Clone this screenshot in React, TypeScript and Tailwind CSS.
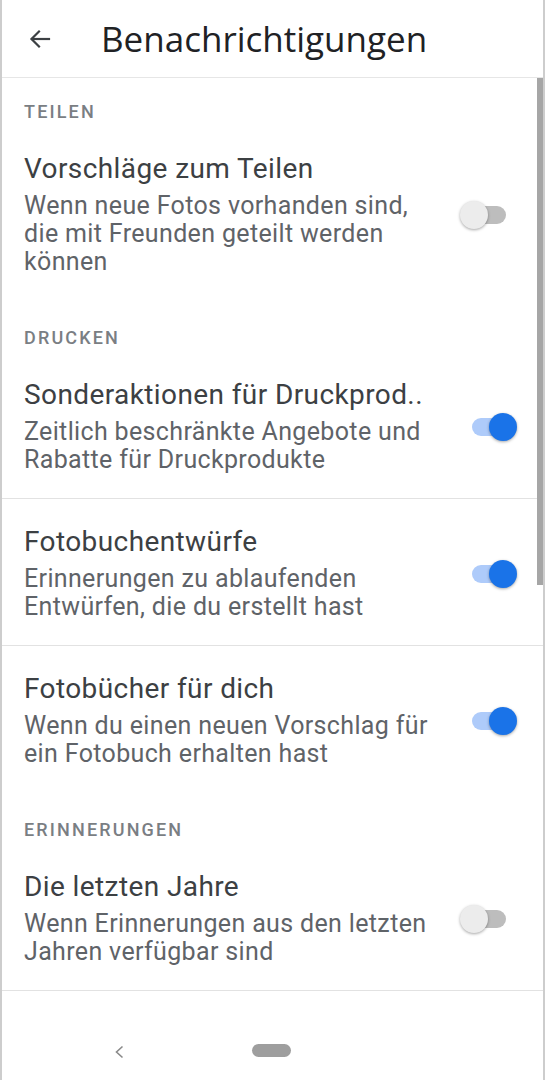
import React from "react";

function Toggle({ on }: { on: boolean }) {
  return (
    <div className="relative w-[57px] h-[28px] shrink-0">
      <div
        className={
          "absolute left-[12px] right-[11px] top-[5px] h-[18px] rounded-full " +
          (on ? "bg-[#aecbfa]" : "bg-[#bdbdbd]")
        }
      />
      <div
        className={
          "absolute top-0 w-[28px] h-[28px] rounded-full shadow-[0_1px_3px_rgba(0,0,0,0.35)] " +
          (on ? "right-0 bg-[#1a73e8]" : "left-0 bg-[#ececec]")
        }
      />
    </div>
  );
}

function SectionHeader({ children, first }: { children: React.ReactNode; first?: boolean }) {
  return (
    <div
      className={
        "pl-[22px] pb-[4px] text-[18px] leading-[20px] font-medium tracking-[0.12em] text-[#7a7e83] " +
        (first ? "pt-[24px]" : "pt-[28px]")
      }
    >
      {children}
    </div>
  );
}

function Item({
  title,
  lines,
  on,
  divider,
}: {
  title: string;
  lines: string[];
  on: boolean;
  divider?: boolean;
}) {
  return (
    <div
      className={
        "flex items-center pl-[22px] pr-[26px] pt-[27px] pb-[24px] " +
        (divider ? "border-b border-[#e2e2e2]" : "")
      }
    >
      <div className="flex-1 min-w-0">
        <div className="text-[28px] leading-[32px] tracking-[0.4px] text-[#3c4043] whitespace-nowrap">
          {title}
        </div>
        <div className="mt-[7px] text-[25px] leading-[28px] tracking-[0.35px] text-[#5f6368]">
          {lines.map((l, i) => (
            <div key={i} className="whitespace-nowrap">
              {l}
            </div>
          ))}
        </div>
      </div>
      <Toggle on={on} />
    </div>
  );
}

export default function App() {
  return (
    <div
      className="w-[545px] h-[1080px] bg-white flex flex-col overflow-hidden border-l-2 border-r-2 border-[#cdcdcd]"
      style={{ fontFamily: "Roboto, 'Noto Sans', sans-serif" }}
    >
      <header className="h-[78px] shrink-0 flex items-center border-b border-[#e6e6e6]">
        <svg
          className="ml-[26px]"
          width="24"
          height="24"
          viewBox="0 0 24 24"
          fill="none"
          stroke="#3c4043"
          strokeWidth="2.2"
          strokeLinecap="square"
        >
          <path d="M21 12H4" />
          <path d="M11 4.5 3.5 12l7.5 7.5" />
        </svg>
        <h1
          className="ml-[49px] text-[35px] text-[#202124] leading-none"
          style={{ fontFamily: "'Open Sans', Roboto, sans-serif" }}
        >
          Benachrichtigungen
        </h1>
      </header>
      <main className="relative flex-1 overflow-hidden">
        <div className="absolute right-0 top-0 w-[6px] h-[507px] bg-[#a6a6a6]" />
        <SectionHeader first>TEILEN</SectionHeader>
        <Item
          title="Vorschläge zum Teilen"
          lines={["Wenn neue Fotos vorhanden sind,", "die mit Freunden geteilt werden", "können"]}
          on={false}
        />
        <SectionHeader>DRUCKEN</SectionHeader>
        <Item
          title="Sonderaktionen für Druckprod.."
          lines={["Zeitlich beschränkte Angebote und", "Rabatte für Druckprodukte"]}
          on={true}
          divider
        />
        <Item
          title="Fotobuchentwürfe"
          lines={["Erinnerungen zu ablaufenden", "Entwürfen, die du erstellt hast"]}
          on={true}
          divider
        />
        <Item
          title="Fotobücher für dich"
          lines={["Wenn du einen neuen Vorschlag für", "ein Fotobuch erhalten hast"]}
          on={true}
        />
        <SectionHeader>ERINNERUNGEN</SectionHeader>
        <Item
          title="Die letzten Jahre"
          lines={["Wenn Erinnerungen aus den letzten", "Jahren verfügbar sind"]}
          on={false}
          divider
        />
      </main>
      <nav className="h-[89px] shrink-0 flex items-start pt-[53px]">
        <svg
          className="ml-[112px] mt-[1px]"
          width="10"
          height="14"
          viewBox="0 0 10 14"
          fill="none"
          stroke="#8a8a8a"
          strokeWidth="1.6"
        >
          <path d="M8.5 1.5 2.5 7l6 5.5" />
        </svg>
        <div className="ml-[128px] w-[39px] h-[13px] rounded-full bg-[#9e9e9e]" />
      </nav>
    </div>
  );
}
